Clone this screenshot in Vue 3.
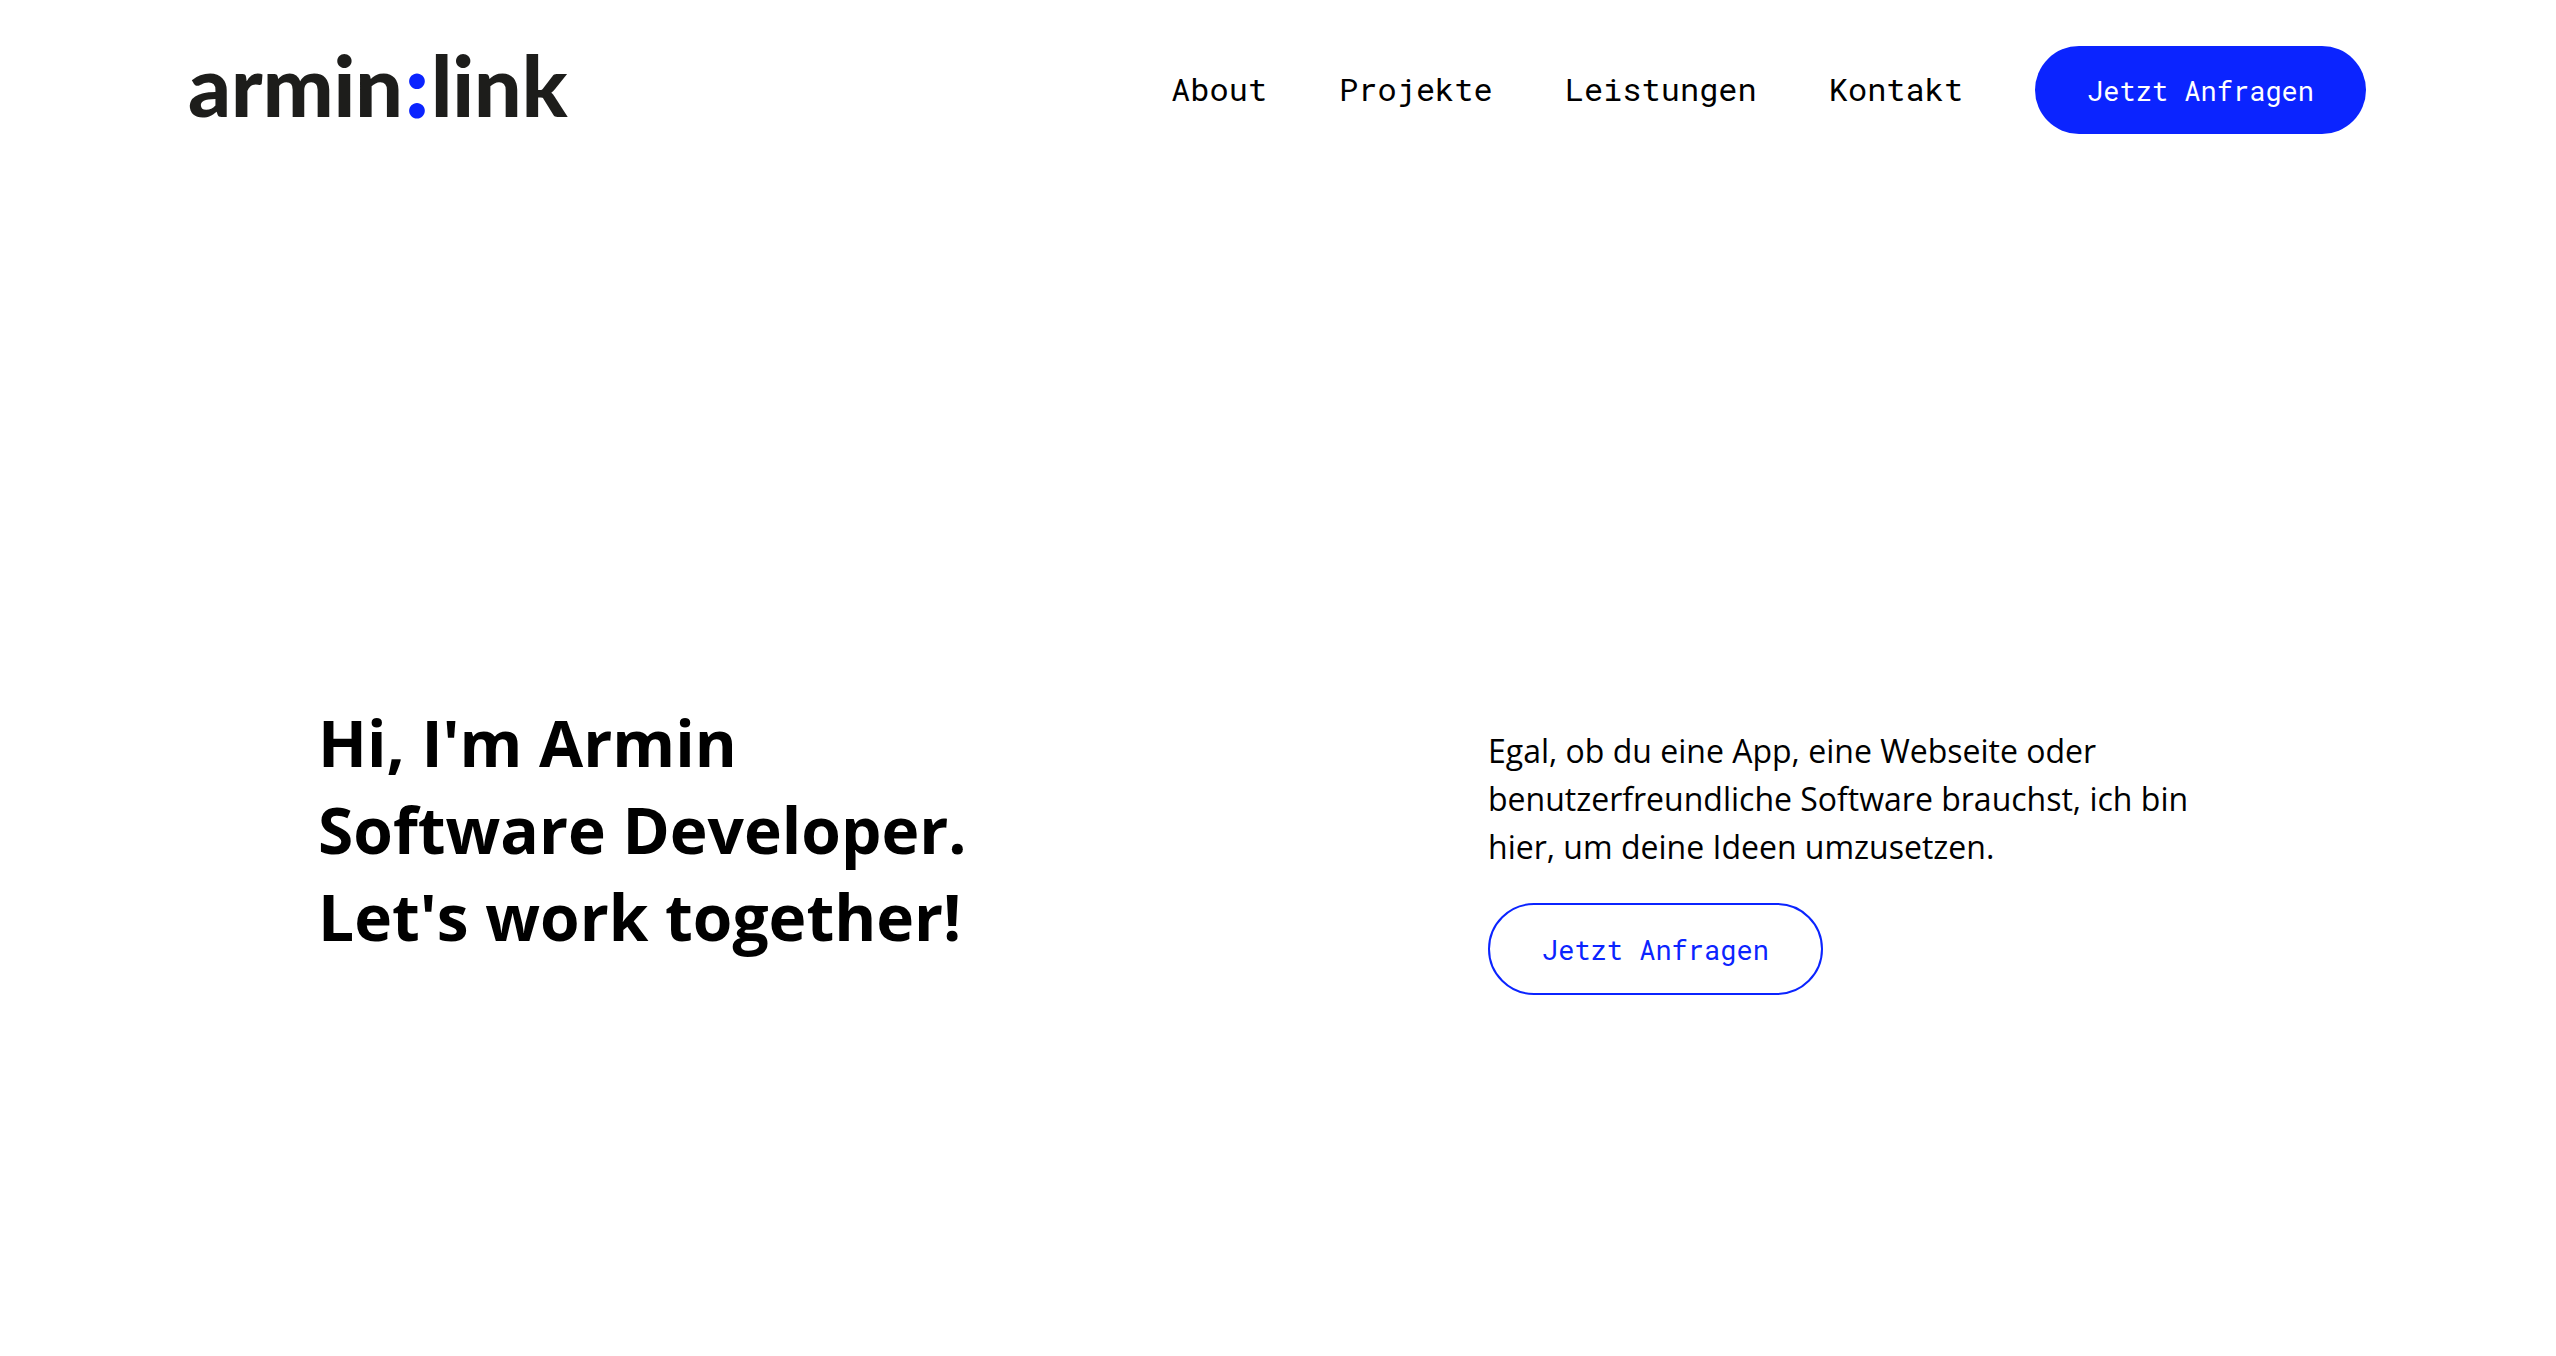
<script setup>
const links = [
  { label: 'About', href: '#about' },
  { label: 'Projekte', href: '#projekte' },
  { label: 'Leistungen', href: '#leistungen' },
  { label: 'Kontakt', href: '#kontakt' },
]
</script>

<template>
  <div class="page">
    <header class="header">
      <a class="logo" href="#">armin<span class="logo-colon">:</span>link</a>
      <nav class="nav">
        <a v-for="link in links" :key="link.label" class="nav-link" :href="link.href">{{ link.label }}</a>
        <button class="button button-primary" type="button">Jetzt Anfragen</button>
      </nav>
    </header>
    <main class="hero">
      <h1 class="title">Hi, I'm Armin<br />Software Developer.<br />Let's work together!</h1>
      <div class="intro">
        <p class="text">Egal, ob du eine App, eine Webseite oder benutzerfreundliche Software brauchst, ich bin hier, um deine Ideen umzusetzen.</p>
        <button class="button button-outline" type="button">Jetzt Anfragen</button>
      </div>
    </main>
  </div>
</template>

<style>
body {
  margin: 0;
  background: #fff;
}
</style>

<style scoped>
.page {
  color: #000;
  font-family: 'Open Sans', sans-serif;
}

.header {
  display: flex;
  align-items: center;
  justify-content: space-between;
  padding: 46px 190px 46px 188px;
}

.logo {
  padding-bottom: 10px;
  color: #1d1d1b;
  font: 900 84px/78px Lato, sans-serif;
  text-decoration: none;
}

.logo-colon {
  padding: 0 3px;
  color: #0b24ff;
  -webkit-text-stroke: 2px #0b24ff;
}

.nav {
  display: flex;
  align-items: center;
  gap: 72px;
}

.nav-link {
  padding-bottom: 2px;
  color: #000;
  font: 32px/44px 'Roboto Mono', 'Liberation Mono', monospace;
  text-decoration: none;
}

.button {
  padding: 27px 52px 25px;
  border: 0;
  border-radius: 46px;
  font: 27px/36px 'Roboto Mono', 'Liberation Mono', monospace;
  cursor: pointer;
}

.button-primary {
  background: #0b24ff;
  color: #fff;
}

.button-outline {
  border: 2px solid #0b24ff;
  background: transparent;
  color: #0b24ff;
}

.hero {
  display: grid;
  grid-template-columns: 39fr 25fr;
  align-items: start;
  padding: 519px 318px 128px;
}

.title {
  margin: 0;
  font-size: 64px;
  font-weight: 700;
  line-height: 87px;
}

.intro {
  padding-top: 28px;
}

.text {
  margin: 0 0 32px;
  font-size: 32px;
  line-height: 48px;
}
</style>
